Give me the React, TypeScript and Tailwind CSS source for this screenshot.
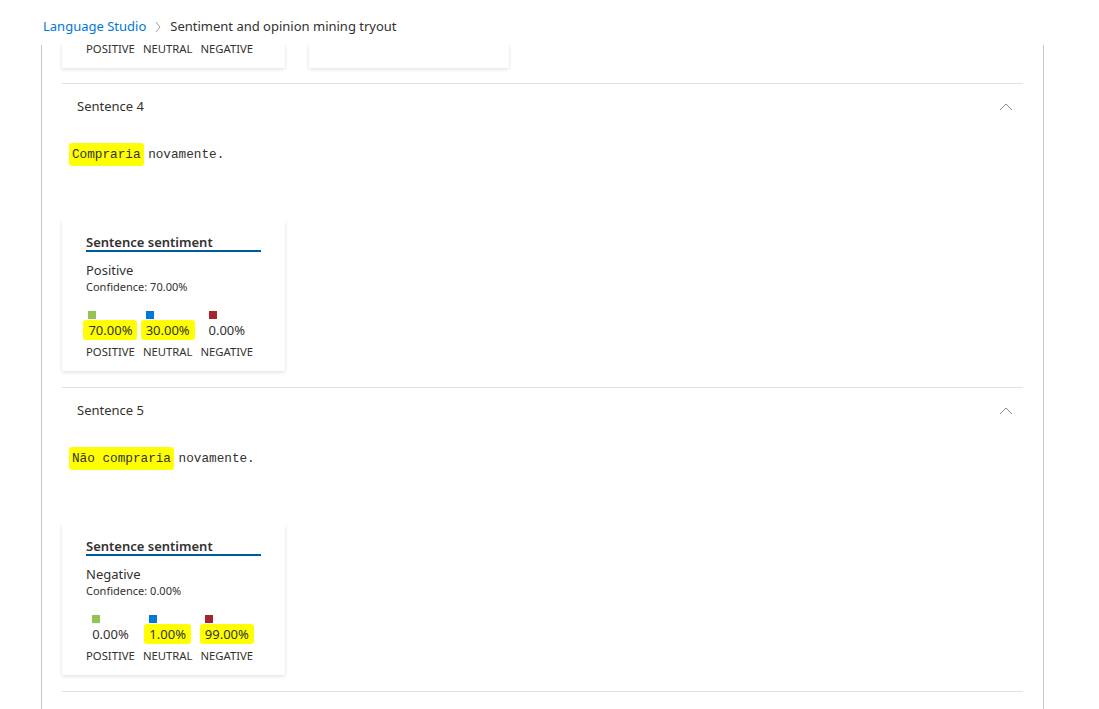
import React from 'react';

type Scores = { positive: string; neutral: string; negative: string };

interface Sentence {
  id: number;
  words: { text: string; mark?: boolean }[];
  label: string;
  confidence: string;
  scores: Scores;
  marks: { positive?: boolean; neutral?: boolean; negative?: boolean };
}

const sentences: Sentence[] = [
  {
    id: 4,
    words: [{ text: 'Compraria', mark: true }, { text: ' novamente.' }],
    label: 'Positive',
    confidence: '70.00%',
    scores: { positive: '70.00%', neutral: '30.00%', negative: '0.00%' },
    marks: { positive: true, neutral: true },
  },
  {
    id: 5,
    words: [{ text: 'Não compraria', mark: true }, { text: ' novamente.' }],
    label: 'Negative',
    confidence: '0.00%',
    scores: { positive: '0.00%', neutral: '1.00%', negative: '99.00%' },
    marks: { neutral: true, negative: true },
  },
];

const font = { fontFamily: '"Noto Sans", "Open Sans", sans-serif' };

const cardShadow =
  'shadow-[0_1.6px_3.6px_rgba(0,0,0,0.13),0_0.3px_0.9px_rgba(0,0,0,0.11)]';

const ScoreColumn = ({
  color,
  value,
  label,
  marked,
}: {
  color: string;
  value: string;
  label: string;
  marked?: boolean;
}) => (
  <div className="flex flex-col items-center">
    <div className="flex flex-col items-start">
      <span className={`block w-2 h-2 ${color}`} />
      <span
        className={`mt-px text-[13px] leading-4 -mx-[5px] px-[5px] py-[2px] rounded-[3px] ${
          marked ? 'bg-[#ffff00]' : ''
        }`}
      >
        {value}
      </span>
    </div>
    <span className="mt-[5px] text-[11.3px] leading-[14px] uppercase">{label}</span>
  </div>
);

const SentimentCard = ({ s }: { s: Sentence }) => (
  <div className={`w-[223px] bg-white ${cardShadow} pl-6 pr-6 pt-[14px] pb-[12px]`}>
    <div className="text-[13px] leading-4 font-semibold border-b-2 border-[#005a9e] w-[175px]">
      Sentence sentiment
    </div>
    <div className="mt-[9px] text-[13px] leading-[19px]">{s.label}</div>
    <div className="text-[11px] leading-[14px]">Confidence: {s.confidence}</div>
    <div className="mt-[17px] flex gap-2">
      <ScoreColumn color="bg-[#92c353]" value={s.scores.positive} label="Positive" marked={s.marks.positive} />
      <ScoreColumn color="bg-[#0078d4]" value={s.scores.neutral} label="Neutral" marked={s.marks.neutral} />
      <ScoreColumn color="bg-[#a4262c]" value={s.scores.negative} label="Negative" marked={s.marks.negative} />
    </div>
  </div>
);

const SentenceSection = ({ s }: { s: Sentence }) => (
  <section className="border-t border-[#e1e1e1]">
    <div className="h-[44px] pt-[2px] flex items-center justify-between pl-[15px] pr-[10px]">
      <span className="text-[13px]">Sentence {s.id}</span>
      <svg width="14" height="8" viewBox="0 0 14 8" fill="none">
        <polyline points="1,7 7,1 13,7" stroke="#8a8886" strokeWidth="1" />
      </svg>
    </div>
    <p
      className="mt-[17px] pl-[10px] text-[12.7px] leading-5 whitespace-pre"
      style={{ fontFamily: '"Liberation Mono", "DejaVu Sans Mono", monospace' }}
    >
      {s.words.map((w, i) =>
        w.mark ? (
          <span key={i} className="bg-[#ffff00] px-[3px] -mx-[3px] py-[4px] rounded-[3px]">
            {w.text}
          </span>
        ) : (
          <span key={i}>{w.text}</span>
        )
      )}
    </p>
    <div className="mt-[55px] mb-4">
      <SentimentCard s={s} />
    </div>
  </section>
);

export default function App() {
  return (
    <div className="w-[1099px] h-[709px] bg-white text-[#323130] overflow-hidden flex flex-col" style={font}>
      <nav className="h-[45px] flex items-center pl-[43px] pt-[8px] text-[13px]">
        <span className="text-[#0078d4]">Language Studio</span>
        <svg className="mx-[8px]" width="8" height="12" viewBox="0 0 8 12" fill="none">
          <polyline points="2,1 6,6 2,11" stroke="#a19f9d" strokeWidth="1" />
        </svg>
        <span>Sentiment and opinion mining tryout</span>
      </nav>

      <main className="ml-[41px] w-[1003px] flex-1 border-x border-[#c8c6c4] px-5 overflow-hidden">
        {/* end of previous sentence cards, scrolled out of view */}
        <div className="h-[38px] flex items-end gap-6 pb-[15px]">
          <div className={`w-[223px] h-[40px] bg-white ${cardShadow} flex items-end pb-[12px] pl-6`}>
            <div className="flex gap-2 text-[11.3px] leading-[14px]">
              <span>POSITIVE</span>
              <span>NEUTRAL</span>
              <span>NEGATIVE</span>
            </div>
          </div>
          <div className={`w-[200px] h-[40px] bg-white ${cardShadow}`} />
        </div>
        {sentences.map((s) => (
          <SentenceSection key={s.id} s={s} />
        ))}
        <div className="border-t border-[#e1e1e1]" />
      </main>
    </div>
  );
}
